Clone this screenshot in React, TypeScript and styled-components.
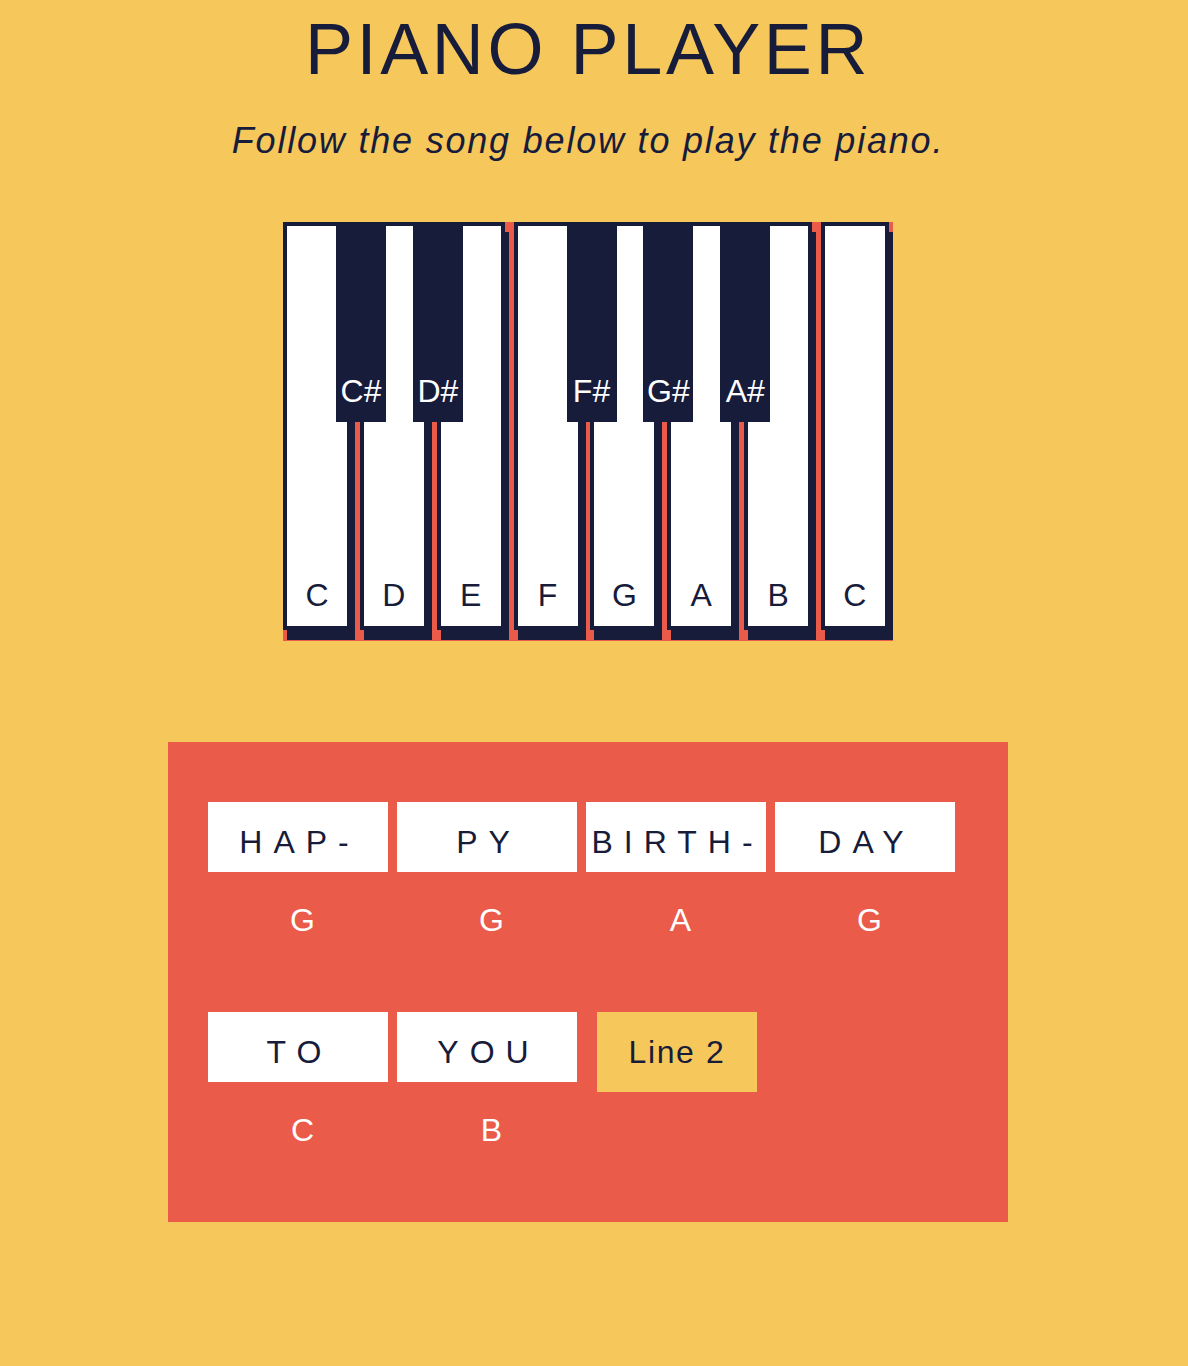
import React from "react";
import styled, { createGlobalStyle } from "styled-components";

const YELLOW = "#F6C75B";
const RED = "#EA5B4A";
const NAVY = "#171C3A";

const GlobalStyle = createGlobalStyle`
  html, body {
    margin: 0;
    padding: 0;
    background: ${YELLOW};
  }
  body {
    font-family: "Liberation Sans", Arial, Helvetica, sans-serif;
    color: ${NAVY};
    min-height: 100vh;
  }
`;

const Page = styled.main`
  width: 1176px;
  text-align: center;
  padding-bottom: 40px;
`;

const Title = styled.h1`
  margin: 13px 0 0;
  font-size: 72px;
  line-height: 72px;
  font-weight: 400;
  letter-spacing: 0.05em;
  color: ${NAVY};
`;

const Subtitle = styled.p`
  margin: 38px 0 0;
  font-size: 36px;
  line-height: 36px;
  font-style: italic;
  letter-spacing: 0.05em;
  color: ${NAVY};
`;

const Piano = styled.div`
  display: flex;
  justify-content: space-between;
  align-items: flex-start;
  width: 610px;
  height: 419px;
  padding-right: 4px;
  box-sizing: border-box;
  margin: 63px auto 0;
  background: ${RED};
`;

const WhiteKey = styled.div`
  position: relative;
  flex-shrink: 0;
  width: 68px;
  height: 408px;
  box-sizing: border-box;
  border: 4px solid ${NAVY};
  background: #ffffff;
  box-shadow: 4px 10px 0 ${NAVY};
  display: flex;
  flex-direction: column;
  justify-content: flex-end;
  align-items: center;
  padding-bottom: 15px;
  font-size: 32px;
  line-height: 32px;
  color: ${NAVY};
`;

const BlackKey = styled.div`
  position: absolute;
  top: -4px;
  left: 49px;
  z-index: 2;
  width: 50px;
  height: 200px;
  box-sizing: border-box;
  background: ${NAVY};
  color: #ffffff;
  display: flex;
  flex-direction: column;
  justify-content: flex-end;
  align-items: center;
  padding-bottom: 15px;
  font-size: 32px;
  line-height: 32px;
`;

const Panel = styled.section`
  width: 840px;
  height: 480px;
  box-sizing: border-box;
  margin: 101px auto 0;
  padding: 60px 40px 0;
  background: ${RED};
  display: flex;
  flex-direction: column;
  gap: 76px;
`;

const Row = styled.div`
  display: flex;
  align-items: flex-start;
`;

const Column = styled.div`
  flex-shrink: 0;
  width: 189px;
  display: flex;
  flex-direction: column;
`;

const Word = styled.div`
  width: 180px;
  height: 70px;
  box-sizing: border-box;
  padding-top: 10px;
  padding-left: 3px;
  background: #ffffff;
  color: ${NAVY};
  font-size: 32px;
  line-height: 60px;
  letter-spacing: 11px;
  text-align: center;
  white-space: nowrap;
`;

const Note = styled.div`
  margin-top: 32px;
  font-size: 32px;
  line-height: 32px;
  color: #ffffff;
  text-align: center;
`;

const LineButton = styled.button`
  margin-left: 11px;
  width: 160px;
  height: 80px;
  padding: 0;
  border: 0;
  background: ${YELLOW};
  color: ${NAVY};
  font-family: "Liberation Sans", Arial, Helvetica, sans-serif;
  font-size: 32px;
  line-height: 80px;
  letter-spacing: 0.05em;
  cursor: pointer;
`;

const keys: { note: string; sharp?: string }[] = [
  { note: "C", sharp: "C#" },
  { note: "D", sharp: "D#" },
  { note: "E" },
  { note: "F", sharp: "F#" },
  { note: "G", sharp: "G#" },
  { note: "A", sharp: "A#" },
  { note: "B" },
  { note: "C" },
];

const line1 = [
  { word: "HAP-", note: "G" },
  { word: "PY", note: "G" },
  { word: "BIRTH-", note: "A" },
  { word: "DAY", note: "G" },
];

const line2 = [
  { word: "TO", note: "C" },
  { word: "YOU", note: "B" },
];

export default function App() {
  return (
    <>
      <GlobalStyle />
      <Page>
        <Title>PIANO PLAYER</Title>
        <Subtitle>Follow the song below to play the piano.</Subtitle>
        <Piano>
          {keys.map((k, i) => (
            <WhiteKey key={i}>
              {k.sharp && <BlackKey>{k.sharp}</BlackKey>}
              {k.note}
            </WhiteKey>
          ))}
        </Piano>
        <Panel>
          <Row>
            {line1.map((l, i) => (
              <Column key={i}>
                <Word>{l.word}</Word>
                <Note>{l.note}</Note>
              </Column>
            ))}
          </Row>
          <Row>
            {line2.map((l, i) => (
              <Column key={i}>
                <Word>{l.word}</Word>
                <Note>{l.note}</Note>
              </Column>
            ))}
            <LineButton>Line 2</LineButton>
          </Row>
        </Panel>
      </Page>
    </>
  );
}
